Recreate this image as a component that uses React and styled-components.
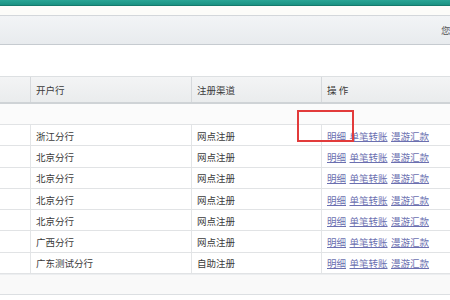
import React from "react";
import styled, { createGlobalStyle } from "styled-components";

const Global = createGlobalStyle`
  html, body {
    margin: 0;
    padding: 0;
    background: #ffffff;
    overflow: hidden;
  }
  body {
    font-family: "Noto Sans CJK SC", "Noto Sans", sans-serif;
    font-size: 9.5px;
    color: #3a3a3a;
  }
`;

const Page = styled.div`
  position: relative;
  width: 450px;
  height: 300px;
  overflow: hidden;
`;

const TopBar = styled.div`
  height: 5px;
  background: linear-gradient(#2aa595, #1b9282);
  border-bottom: 1px solid #157a6c;
`;

const Gap = styled.div`
  height: ${(p) => p.h}px;
  background: ${(p) => p.bg || "#ffffff"};
`;

const SubBar = styled.div`
  height: 28px;
  border-top: 1px solid #d3d7db;
  border-bottom: 1px solid #c6cbd0;
  background: linear-gradient(#f2f4f6, #e8ebee);
  display: flex;
  align-items: center;
  padding-left: 441px;
  white-space: nowrap;
  color: #555;
`;

const Row = styled.div`
  display: grid;
  grid-template-columns: 31px 161px 130px 1fr;
  height: ${(p) => p.h}px;
  box-sizing: border-box;
`;

const HeadRow = styled(Row)`
  border-top: 1px solid #dde0e2;
  border-bottom: 2px solid #cfd3d6;
  background: linear-gradient(#f3f4f5, #eaeced);
`;

const BodyRow = styled(Row)`
  border-bottom: 1px solid #e1e3e5;
  background: #ffffff;
`;

const Cell = styled.div`
  display: flex;
  align-items: center;
  padding-left: 5px;
  padding-top: 1px;
  white-space: nowrap;
  border-right: 1px solid ${(p) => (p.head ? "#d6d9dc" : "#e3e5e7")};
  &:last-child {
    border-right: none;
  }
`;

const Blank = styled.div`
  height: 20px;
  background: #fbfbfb;
  border-bottom: 1px solid #e1e3e5;
`;

const Footer = styled.div`
  height: 19px;
  background: #f9f9f9;
  border-top: 1px solid #eceef0;
  border-bottom: 1px solid #dcdfe2;
`;

const Link = styled.a`
  color: #6b6fb0;
  text-decoration: underline;
  margin-right: 3.5px;
  cursor: pointer;
`;

const Mark = styled.div`
  position: absolute;
  left: 297px;
  top: 110px;
  width: 57px;
  height: 32px;
  box-sizing: border-box;
  border: 2px solid #e23b3b;
`;

const rows = [
  ["浙江分行", "网点注册"],
  ["北京分行", "网点注册"],
  ["北京分行", "网点注册"],
  ["北京分行", "网点注册"],
  ["北京分行", "网点注册"],
  ["广西分行", "网点注册"],
  ["广东测试分行", "自助注册"],
];

export default function App() {
  return (
    <Page>
      <Global />
      <TopBar />
      <Gap h={9} bg="#fcfcf9" />
      <SubBar>您好，欢迎</SubBar>
      <Gap h={31} />
      <HeadRow h={28}>
        <Cell head />
        <Cell head>开户行</Cell>
        <Cell head>注册渠道</Cell>
        <Cell head>操 作</Cell>
      </HeadRow>
      <Blank />
      {rows.map((r, i) => (
        <BodyRow key={i} h={21.3}>
          <Cell />
          <Cell>{r[0]}</Cell>
          <Cell>{r[1]}</Cell>
          <Cell>
            <Link>明细</Link>
            <Link>单笔转账</Link>
            <Link>漫游汇款</Link>
          </Cell>
        </BodyRow>
      ))}
      <Footer />
      <Mark />
    </Page>
  );
}
